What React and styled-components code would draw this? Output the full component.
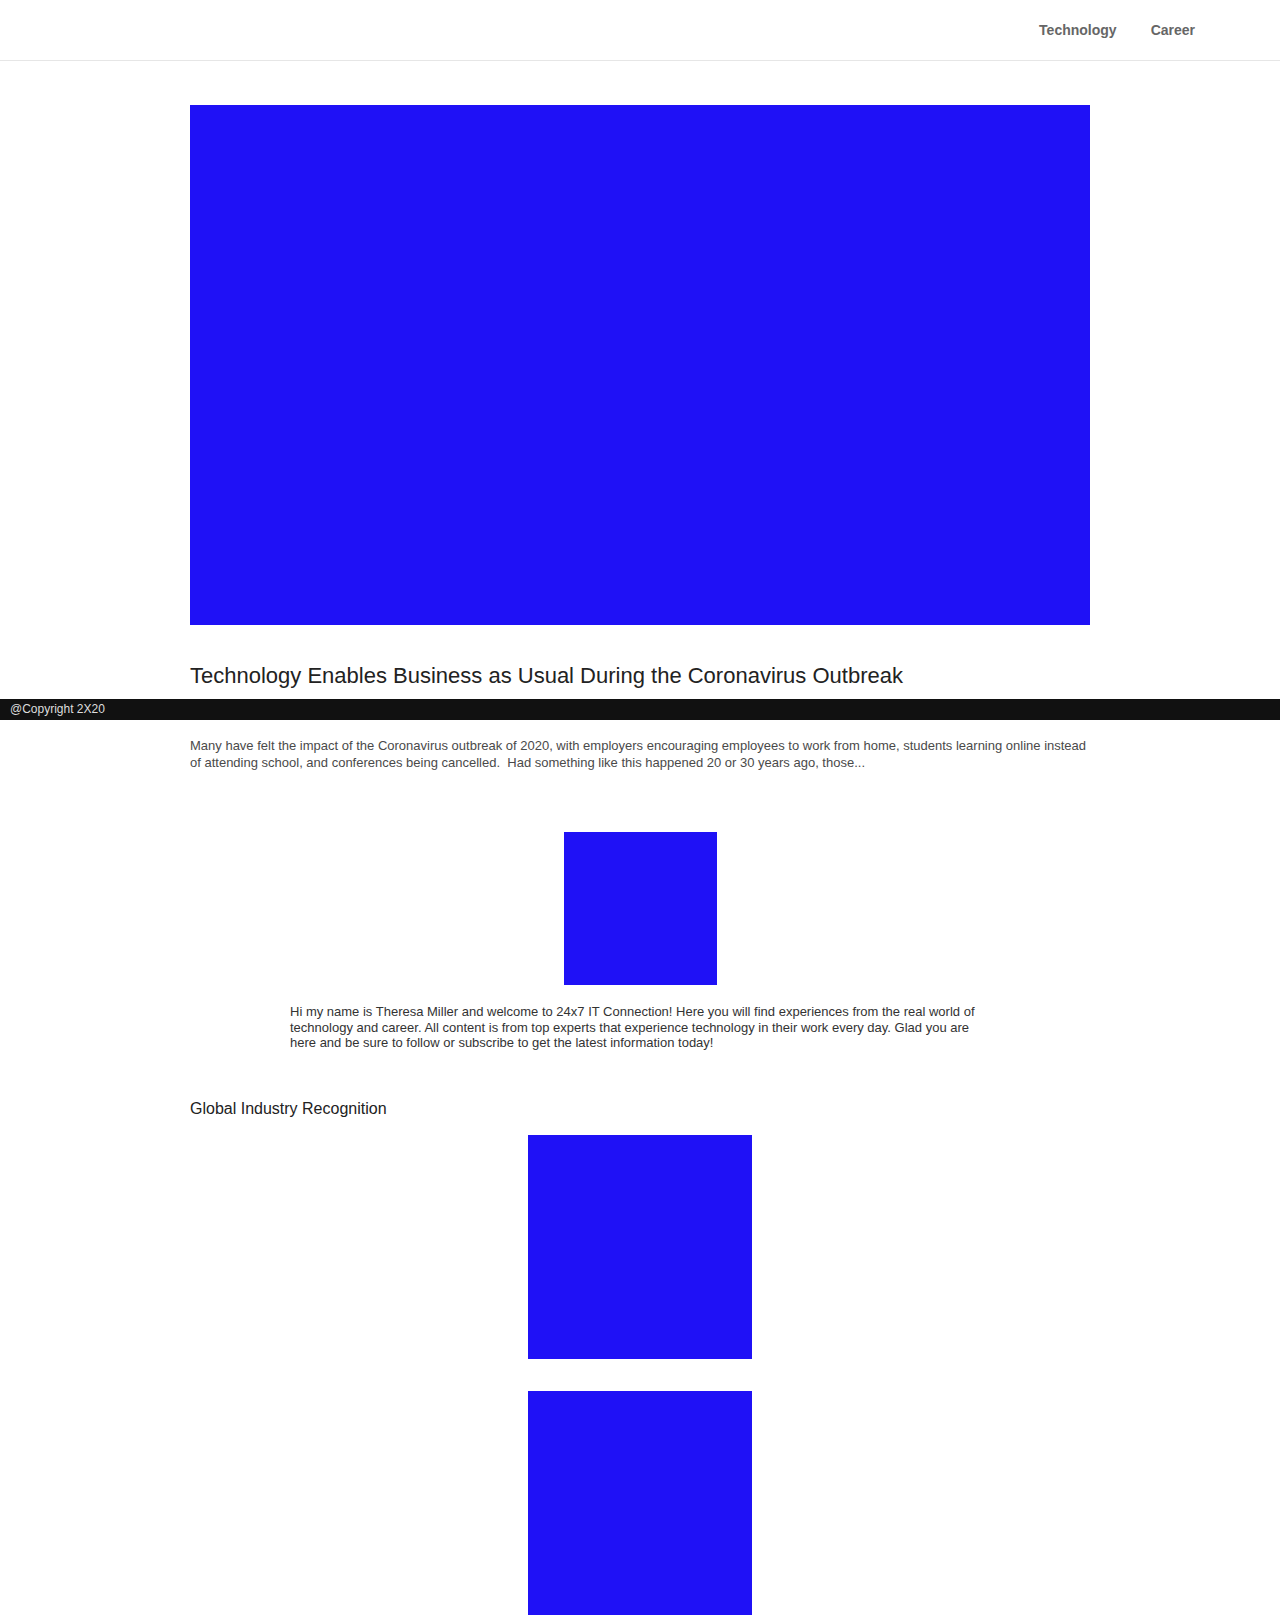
import React from 'react';
import styled, { createGlobalStyle } from 'styled-components';

const GlobalStyle = createGlobalStyle`
  body {
    margin: 0;
    background: #fff;
    font-family: "Liberation Sans", Arial, sans-serif;
  }
`

const Header = styled.header`
  height: 60px;
  border-bottom: 1px solid #e6e6e6;
  display: flex;
  justify-content: flex-end;
  align-items: center;
  padding-right: 68px;
`

const NavLink = styled.a`
  font-size: 14px;
  font-weight: bold;
  color: #666;
  padding: 0 17px;
  text-decoration: none;
`

const Main = styled.main`
  width: 900px;
  margin: 0 auto;
  padding-top: 44px;
`

const Block = styled.div`
  background: #1f11f6;
  width: ${p => p.w}px;
  height: ${p => p.h}px;
  margin: ${p => p.center ? '0 auto' : '0'};
`

const Title = styled.h1`
  font-size: 22px;
  font-weight: normal;
  color: #222;
  margin: 38px 0 0;
  line-height: 25px;
`

const Excerpt = styled.p`
  font-size: 13px;
  line-height: 17px;
  color: #4a4a4a;
  margin: 49px 0 0;
`

const About = styled.section`
  margin-top: 61px;
`

const Bio = styled.p`
  width: 700px;
  margin: 19px auto 0;
  font-size: 13px;
  line-height: 15.5px;
  color: #333;
`

const SectionTitle = styled.h2`
  font-size: 16px;
  font-weight: normal;
  color: #222;
  line-height: 18px;
  margin: 49px 0 0;
`

const Awards = styled.div`
  display: flex;
  flex-direction: column;
  align-items: center;
  gap: 32px;
  margin-top: 17px;
  padding-bottom: 40px;
`

const Footer = styled.footer`
  position: fixed;
  top: 699px;
  left: 0;
  right: 0;
  height: 21px;
  background: #111;
  color: #ddd;
  font-size: 12px;
  line-height: 21px;
  padding-left: 10px;
`

const App = () => {
  return (
    <>
      <GlobalStyle />
      <Header>
        <NavLink href="#">Technology</NavLink>
        <NavLink href="#">Career</NavLink>
      </Header>
      <Main>
        <Block w={900} h={520} />
        <Title>Technology Enables Business as Usual During the Coronavirus Outbreak</Title>
        <Excerpt>
          Many have felt the impact of the Coronavirus outbreak of 2020, with employers encouraging employees to work from home, students learning online instead of attending school, and conferences being cancelled.&nbsp; Had something like this happened 20 or 30 years ago, those...
        </Excerpt>
        <About>
          <Block w={153} h={153} center />
          <Bio>
            Hi my name is Theresa Miller and welcome to 24x7 IT Connection! Here you will find experiences from the real world of technology and career. All content is from top experts that experience technology in their work every day. Glad you are here and be sure to follow or subscribe to get the latest information today!
          </Bio>
        </About>
        <SectionTitle>Global Industry Recognition</SectionTitle>
        <Awards>
          <Block w={224} h={224} />
          <Block w={224} h={224} />
        </Awards>
      </Main>
      <Footer>@Copyright 2X20</Footer>
    </>
  )
}

export default App
